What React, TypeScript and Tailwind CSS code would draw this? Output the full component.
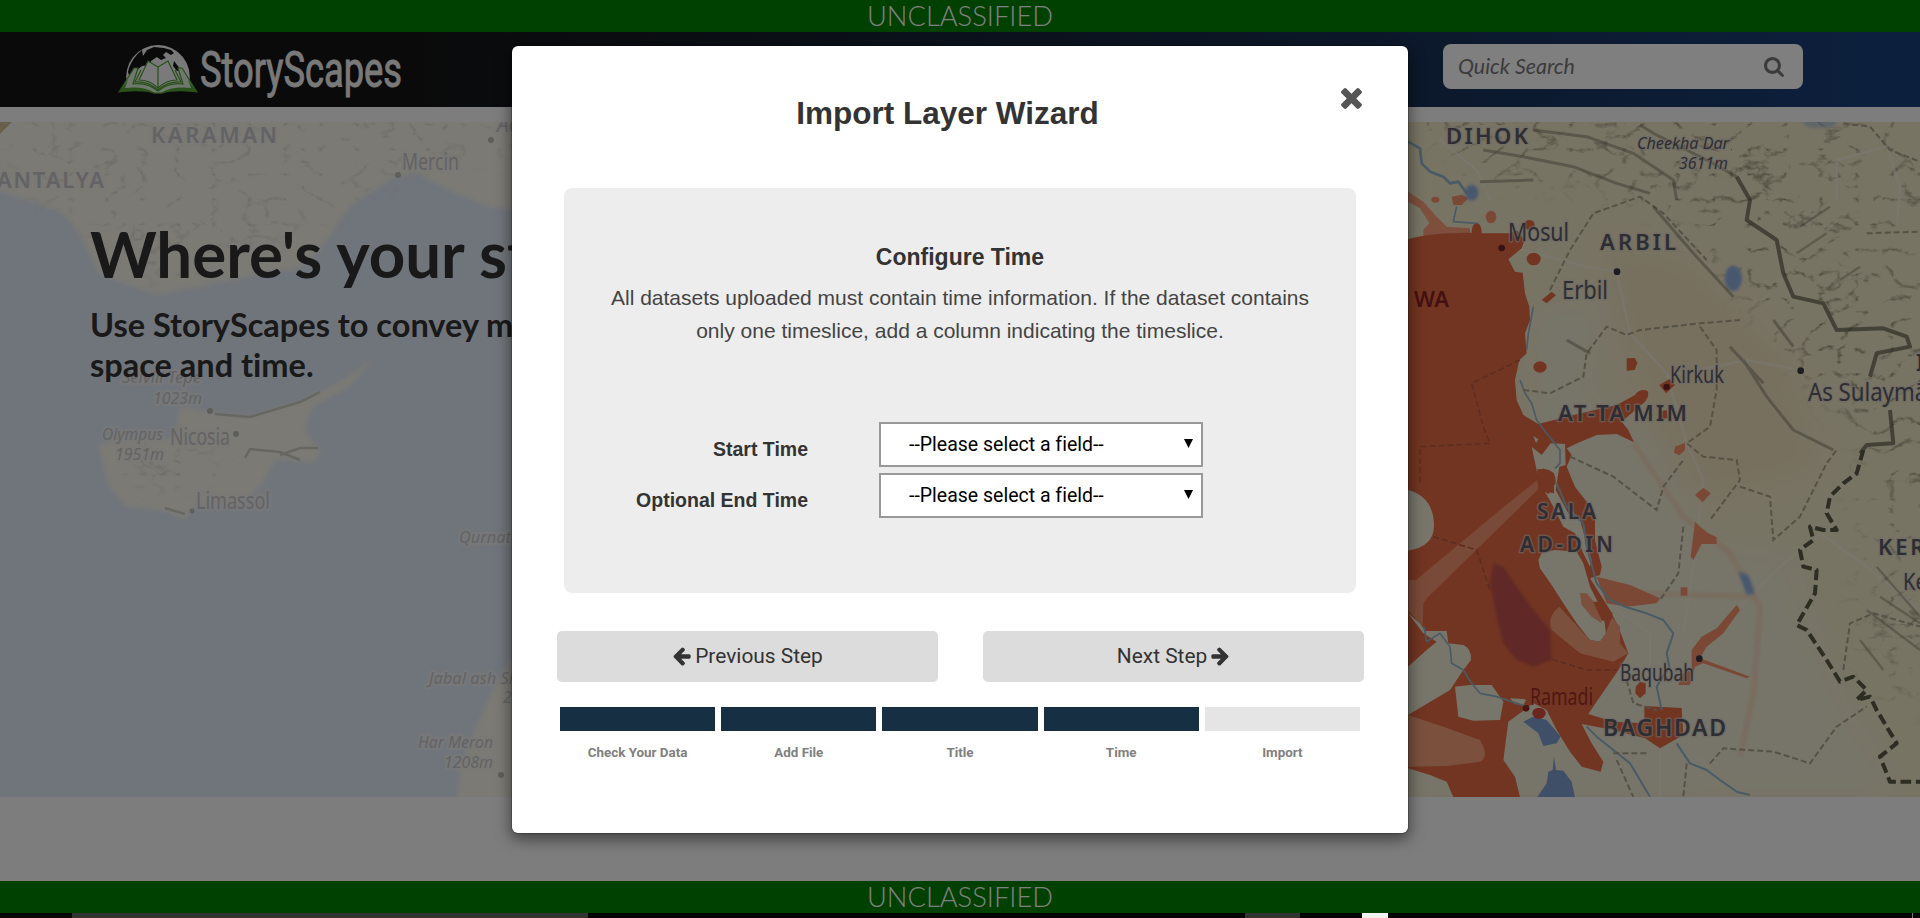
import React from 'react';

const TIMES =
  'M1490 1322q0 40-28 68l-136 136q-28 28-68 28t-68-28l-294-294-294 294q-28 28-68 28t-68-28l-136-136q-28-28-28-68t28-68l294-294-294-294q-28-28-28-68t28-68l136-136q28-28 68-28t68 28l294 294 294-294q28-28 68-28t68 28l136 136q28 28 28 68t-28 68l-294 294 294 294q28 28 28 68z';
const ARROW_LEFT =
  'M1664 896v128q0 53-32.5 90.5t-84.5 37.5h-704l293 294q38 36 38 90t-38 90l-75 76q-37 37-90 37-52 0-91-37l-651-652q-37-37-37-90 0-52 37-91l651-650q38-38 91-38 52 0 90 38l75 74q38 38 38 91t-38 91l-293 293h704q52 0 84.5 37.5t32.5 90.5z';
const SEARCH =
  'M1216 832q0-185-131.5-316.5t-316.5-131.5-316.5 131.5-131.5 316.5 131.5 316.5 316.5 131.5 316.5-131.5 131.5-316.5zm512 832q0 52-38 90t-90 38q-54 0-90-38l-343-342q-179 124-399 124-143 0-273.5-55.5t-225-150-150-225-55.5-273.5 55.5-273.5 150-225 225-150 273.5-55.5 273.5 55.5 225 150 150 225 55.5 273.5q0 220-124 399l343 343q37 37 37 90z';

function Logo() {
  return (
    <svg className="block h-[66px] w-[300px]" viewBox="110 36 300 66">
      <path d="M127 84A31.8 31.8 0 1 1 189 84L158 91Z" fill="#f2f2f2" />
      <path
        d="M129 68Q133 57 142 50L143 56L147 50L154 47L164 48L171 50L174 53L171 55L166 52L163 55L166 58L161 60L157 57L151 61L150 65L142 66L136 71L129 75L128 72Z"
        fill="#141414"
      />
      <path d="M174 61l7 9-4 1-4-5z" fill="#141414" />
      <path
        d="M119 92L134 68L138 68L133 84Q147 82 158 91Q169 82 183 84L178 68L182 68L197 92Q172 88 162 93H154Q144 88 119 92Z"
        fill="#dff0d8"
        stroke="#4e9c30"
        strokeWidth="1.2"
      />
      <path d="M119 92L128 80L125 88Q144 86 155 93H161Q172 86 191 88L188 80L197 92Q172 90 162 93.5H154Q144 90 119 92Z" fill="#52a232" />
      <path
        d="M148 61L158 67V88Q150 80 139 80ZM168 61L158 67V88Q166 80 177 80Z"
        fill="#f5f5f5"
        stroke="#4e9c30"
        strokeWidth="1.2"
      />
      <path d="M141 70L135 82Q148 81 158 90Q168 81 181 82L175 70" fill="none" stroke="#4e9c30" strokeWidth="1.2" />
      <text
        x="200"
        y="87"
        fontFamily="Roboto, sans-serif"
        fontSize="50"
        fill="#f2f2f2"
        stroke="#f2f2f2"
        strokeWidth="0.9"
        textLength="202"
        lengthAdjust="spacingAndGlyphs"
      >
        StoryScapes
      </text>
    </svg>
  );
}

type Label = { t: string; x: number; y: number; w: number; s: number; b?: boolean; i?: boolean; c?: string };

const eastLabels: Label[] = [
  { t: 'DIHOK', x: 1446, y: 144, w: 82, s: 22, b: true },
  { t: 'Cheekha Dar', x: 1637, y: 149, w: 92, s: 17, i: true },
  { t: '3611m', x: 1679, y: 169, w: 49, s: 17, i: true },
  { t: 'Mosul', x: 1508, y: 241, w: 61, s: 26 },
  { t: 'ARBIL', x: 1600, y: 250, w: 76, s: 22, b: true },
  { t: 'Erbil', x: 1562, y: 299, w: 46, s: 26 },
  { t: 'Kirkuk', x: 1670, y: 383, w: 54, s: 23 },
  { t: 'As Sulaymānīyah', x: 1808, y: 401, w: 176, s: 26 },
  { t: "AT-TA'MIM", x: 1558, y: 421, w: 129, s: 22, b: true },
  { t: 'SALA', x: 1537, y: 519, w: 59, s: 21, b: true },
  { t: 'AD-DIN', x: 1520, y: 552, w: 93, s: 21, b: true },
  { t: 'KERMAN', x: 1878, y: 555, w: 108, s: 22, b: true },
  { t: 'Kermanshah', x: 1903, y: 590, w: 120, s: 23 },
  { t: 'IRAN', x: 1916, y: 371, w: 60, s: 23, b: true },
  { t: 'Baqubah', x: 1620, y: 681, w: 74, s: 24 },
  { t: 'BAGHDAD', x: 1603, y: 736, w: 123, s: 23, b: true },
];

const redLabels: Label[] = [
  { t: 'WA', x: 1414, y: 307, w: 35, s: 22, b: true, c: '#8c2020' },
  { t: 'Ramadi', x: 1530, y: 705, w: 63, s: 24, c: '#9c2f28' },
];

const westLabels: Label[] = [
  { t: 'KARAMAN', x: 151, y: 143, w: 126, s: 22, b: true },
  { t: 'ANTALYA', x: -3, y: 188, w: 107, s: 22, b: true },
  { t: 'Mercin', x: 402, y: 170, w: 57, s: 24 },
  { t: 'Adana', x: 497, y: 132, w: 60, s: 22, i: true },
  { t: 'Selvili Tepe', x: 122, y: 383, w: 79, s: 17, i: true },
  { t: '1023m', x: 153, y: 404, w: 49, s: 17, i: true },
  { t: 'Olympus', x: 102, y: 440, w: 61, s: 17, i: true },
  { t: '1951m', x: 115, y: 460, w: 49, s: 17, i: true },
  { t: 'Nicosia', x: 170, y: 445, w: 60, s: 23 },
  { t: 'Limassol', x: 196, y: 509, w: 74, s: 23 },
  { t: 'Qurnat', x: 459, y: 543, w: 52, s: 17, i: true },
  { t: 'Jabal ash Shaykh', x: 429, y: 684, w: 124, s: 17, i: true },
  { t: '2814m', x: 503, y: 703, w: 48, s: 17, i: true },
  { t: 'Har Meron', x: 418, y: 748, w: 75, s: 17, i: true },
  { t: '1208m', x: 444, y: 768, w: 49, s: 17, i: true },
];

function Labels({ items, fill, halo, haloWidth }: { items: Label[]; fill: string; halo: string; haloWidth: number }) {
  return (
    <g
      fontFamily="'Noto Sans', 'Open Sans', sans-serif"
      paintOrder="stroke"
      strokeWidth={haloWidth}
      strokeLinejoin="round"
      strokeOpacity="0.6"
    >
      {items.map((l) => (
        <text
          key={l.t}
          x={l.x}
          y={l.y}
          fontSize={l.s}
          fontWeight={l.b ? 600 : 400}
          fontStyle={l.i ? 'italic' : 'normal'}
          fill={l.c ?? fill}
          stroke={l.c ? 'none' : halo}
          textLength={l.w}
          lengthAdjust={l.b ? 'spacing' : 'spacingAndGlyphs'}
        >
          {l.t}
        </text>
      ))}
    </g>
  );
}

function MapBackdrop() {
  return (
    <svg className="absolute inset-0 h-full w-full" viewBox="0 122 1920 675" preserveAspectRatio="none">
      <defs>
        <filter id="relief" x="0" y="0" width="100%" height="100%" colorInterpolationFilters="sRGB">
          <feTurbulence type="turbulence" baseFrequency="0.028 0.04" numOctaves="4" seed="8" result="n" />
          <feColorMatrix in="n" type="matrix" values="0 0 0 0 0.33  0 0 0 0 0.31  0 0 0 0 0.22  -5 0 0 0 0.95" />
        </filter>
        <filter id="soft" x="-20%" y="-20%" width="140%" height="140%">
          <feGaussianBlur stdDeviation="14" />
        </filter>
        <filter id="soft2" x="-40%" y="-40%" width="180%" height="180%">
          <feGaussianBlur stdDeviation="4" />
        </filter>
        <filter id="soft3" x="-20%" y="-20%" width="140%" height="140%">
          <feGaussianBlur stdDeviation="2" />
        </filter>
        <mask id="ranges" maskUnits="userSpaceOnUse" x="1400" y="122" width="520" height="675">
          <g filter="url(#soft)" fill="#fff">
            <path d="M1400 100H1960V480L1890 470L1850 430L1800 370L1745 300L1680 225L1590 185L1480 180Z" fillOpacity="0.6" />
            <path d="M1650 120H1760L1790 220L1840 300L1880 400L1830 370L1745 270L1690 190Z" fillOpacity="0.5" />
            <path d="M1780 340L1960 300V700L1880 600L1850 480L1900 440Z" fillOpacity="0.5" />
            <path d="M1850 580L1960 600V730L1870 690Z" fillOpacity="0.4" />
          </g>
        </mask>
        <mask id="taurus" maskUnits="userSpaceOnUse" x="0" y="122" width="520" height="675">
          <g filter="url(#soft)" fill="#fff">
            <path d="M0 100H520V150L400 170L300 230L160 290L90 230L20 180Z" fillOpacity="0.5" />
            <path d="M120 455H230L200 480H130Z" fillOpacity="0.9" />
          </g>
        </mask>
      </defs>

      <rect x="0" y="122" width="960" height="675" fill="#e1eaf6" />
      <g fill="#f6f4e9" filter="url(#soft3)">
        <path d="M-20 100H540V212L490 207L455 193L415 173L392 178L350 206L320 250L300 268L240 278L157 295L100 275L80 235L65 215L35 202L-20 186Z" />
        <path d="M180 406L215 413L250 416L300 402L340 382L372 360L350 386L312 407L305 428L312 442L320 450L316 462L275 460L262 484L245 500L195 505L185 520L165 511L125 506L108 485L98 445L120 440L175 438Z" />
        <path d="M540 660H510L490 695L475 730L460 770L455 820H540Z" />
      </g>
      <path d="M0 122H12L0 134Z" fill="#d0c096" />
      <rect x="0" y="122" width="520" height="675" filter="url(#relief)" mask="url(#taurus)" opacity="0.35" />
      <path
        d="M215 414L250 417L300 402L320 392M245 458L250 449L280 452L300 460M280 455L300 448H318M165 508L185 514"
        fill="none"
        stroke="#cfcec2"
        strokeWidth="2.5"
      />
      <g fill="#bcbdb5">
        <circle cx="491" cy="140" r="3" />
        <circle cx="398" cy="175" r="3" />
        <circle cx="236" cy="434" r="3" />
        <circle cx="210" cy="411" r="3" />
        <circle cx="192" cy="511" r="2.5" />
        <circle cx="501" cy="775" r="3" />
      </g>
      <Labels items={westLabels} fill="#c6c6ca" halo="#f4f2ee" haloWidth={5} />

      <rect x="1400" y="122" width="520" height="675" fill="#f1e8c8" />
      <g filter="url(#soft)" fill="#eeead4">
        <path d="M1530 320L1600 300L1580 400L1640 420L1690 520L1700 797H1400V640L1560 600Z" />
        <path d="M1690 540L1790 560L1840 700L1900 797H1700Z" fillOpacity="0.8" />
      </g>
      <g filter="url(#soft)" fill="#ecdcb8" fillOpacity="0.6">
        <path d="M1600 240L1690 260L1790 360L1820 470L1700 500L1640 400Z" />
      </g>
      <rect x="1400" y="122" width="520" height="675" filter="url(#relief)" mask="url(#ranges)" opacity="0.8" />

      {/* Coordinates below are in thirds of a pixel, measured from the east sheet's corner. */}
      <g transform="translate(1400 0) scale(0.33333)">
        <g fill="none" stroke="#f5eee0" strokeWidth="7" strokeOpacity="0.6">
          <path d="M120 420L230 510L270 600M330 740L560 800L650 815L690 1000L800 1120L860 1330L910 1440L880 1700L850 1900M800 1130L1040 1080L1200 1110M1260 1600L1130 1710L1040 1800L900 1960M1260 1600L1400 1700L1560 1830M1310 600V480L1460 440L1500 560L1490 680" />
          <path d="M640 1820L750 1900V2060M780 2250V2390M900 2270L960 2350" />
        </g>
        <g stroke="#f6ba94" strokeWidth="16" fill="none" strokeOpacity="0.35" filter="url(#soft2)">
          <path d="M700 1330L850 1550L990 1660L1080 1820L1060 2080L1020 2270M720 1780L1070 1790" />
        </g>

        <path d="M24 575L70 605L110 650L140 680L210 685V710H70V690L88 670L60 625L24 605Z" fill="#fb9e78" />
        <path
          d="M24 718Q90 697 215 698Q215 670 232 668Q246 675 245 700L330 700L352 692L374 720L365 745L325 778L345 815L368 818L375 880L388 920L390 960L375 1000L380 1060L358 1080L345 1140L350 1200L370 1245L415 1272L520 1245L650 1215L705 1185Q718 1165 742 1172Q750 1185 735 1205L665 1265L685 1290L702 1327L650 1302L590 1305L535 1328L500 1345L515 1365L500 1400L525 1460L560 1505L585 1560V1620L605 1700L600 1725L570 1735L630 1830L655 1880L685 1960L655 2010L565 2142L640 2165L733 2170V2118L845 2124L850 2205L780 2245L735 2215L640 2190L545 2172L575 2230L610 2285L602 2315L545 2300L510 2255L470 2190L440 2130L400 2110L325 2165L310 2280L345 2330L360 2391H160L140 2345L90 2325L24 2305Z"
          fill="#e56b45"
        />
        <g fill="#e56b45">
          <ellipse cx="420" cy="1101" rx="20" ry="17" />
          <path d="M680 1075L705 1074L712 1090L704 1110L680 1112Z" />
          <path d="M778 1155L808 1137L825 1155L798 1180Z" />
          <path d="M778 1235L800 1230L804 1255L780 1256Z" />
          <path d="M425 900L455 875L468 886L440 910Z" />
          <ellipse cx="401" cy="777" rx="21" ry="19" />
          <ellipse cx="388" cy="675" rx="16" ry="15" />
        </g>
        <g fill="#f5906b">
          <path d="M155 590L185 584L205 595L185 615H160Z" />
          <ellipse cx="106" cy="599" rx="12" ry="9" />
          <ellipse cx="273" cy="651" rx="16" ry="19" />
          <path d="M825 1340L855 1328V1350L838 1366L822 1358Z" />
          <path d="M885 1485L910 1463L932 1480L908 1507Z" />
          <path d="M872 1670L885 1565L900 1580L925 1600L950 1612V1632H905L880 1680Z" />
          <rect x="842" y="1762" width="20" height="25" />
          <path d="M1010 1815L1020 1830L970 1900L920 1940L900 1975L1050 2030L1040 2035L910 1990L885 2000L870 2055H835L850 2020L875 2010V1950L905 1910L950 1885Z" />
          <path d="M590 1730L690 1755L780 1795L770 1810L680 1820L620 1810Z" />
        </g>
        <path d="M707 2060L720 2045L737 2050V2080L720 2095L706 2080Z" fill="#e56b45" />

        <g fill="#f1ecd6">
          <path d="M395 1340L425 1365L452 1330L495 1332L497 1395L478 1400L467 1470L505 1540L540 1560L560 1630L575 1680L570 1700L550 1660L525 1600L490 1580L460 1520L435 1475L462 1480V1420L430 1405L412 1420Z" />
          <path d="M415 1680L425 1660L465 1650L530 1655L550 1690L570 1760L610 1840L618 1900L600 1925L570 1920L530 1870L490 1810L455 1755L420 1705Z" />
          <path d="M24 1470Q100 1490 102 1575Q103 1640 24 1652Z" />
          <path d="M24 1840L60 1870L75 1893H140L145 1930L190 1935Q215 1945 213 1980L190 2010L150 2070L24 2145V2000L80 1950L110 1925L70 1900Z" />
          <path d="M165 2060L210 2055L275 2055L310 2105L300 2160L220 2162L175 2150Z" />
          <path d="M330 2095L380 2098L370 2115L345 2112Z" />
          <path d="M400 1308L415 1318L408 1330Z" />
        </g>
        <path d="M412 1408Q470 1400 467 1450L445 1482L412 1460Z" fill="#e56b45" />

        <path d="M412 1440L300 1530L24 1760V1800H75L415 1468Z" fill="#f7a27c" fillOpacity="0.75" />
        <path d="M24 1740H120L70 1810L68 1880L24 1830Z" fill="#f29570" />
        <path d="M24 2145L130 2180L240 2220Q270 2270 240 2285L140 2298L24 2300Z" fill="#f6a07b" />
        <path d="M478 1820Q440 1850 455 1890L540 1960L640 1985L685 1960L660 1930V1880L635 1850L618 1900L600 1925L570 1920Z" fill="#f6a07b" />
        <path d="M540 1780H560L590 1815L605 1870L575 1850L545 1815Z" fill="#f6a07b" />
        <path d="M580 1805L610 1805L637 1840L635 1860L605 1862Z" fill="#e56b45" />
        <path d="M280 1690L310 1700L350 1760L400 1830L450 1890L455 1980L400 2000L350 1980L310 1930L290 1850L270 1750Z" fill="#9c3a52" fillOpacity="0.5" filter="url(#soft2)" />

        <g fill="#7f9fd0">
          <path d="M370 2165L400 2150L440 2160L482 2210L470 2230L430 2238L415 2200Z" />
          <path d="M412 2391L440 2350L445 2315L458 2310L462 2270L468 2310L490 2312L515 2345L525 2391Z" />
        </g>
        <ellipse cx="417" cy="2140" rx="20" ry="17" fill="#d84c3e" />
        <g fill="#8fb0dc" filter="url(#soft2)">
          <ellipse cx="1000" cy="835" rx="26" ry="38" />
          <path d="M1015 1715L1045 1725L1065 1780L1040 1785Z" />
          <ellipse cx="215" cy="578" rx="20" ry="24" />
          <ellipse cx="1260" cy="370" rx="50" ry="14" fillOpacity="0.5" />
        </g>
        <g fill="none" stroke="#94b5c8" strokeWidth="8" strokeLinejoin="round">
          <path d="M24 425L60 445L65 490L90 515L130 530L150 550L175 545L200 580" />
          <path d="M170 620L160 665L230 670M400 920L385 1000L380 1050M360 1140L375 1180L395 1210L410 1260L440 1300L480 1350V1390L465 1405" strokeWidth="5" />
          <path d="M470 1450L500 1520L550 1570L560 1640L590 1750L630 1800L680 1822L740 1840L790 1860L820 1900L800 1960L808 2000L770 2060L785 2130" strokeWidth="6" />
          <path d="M72 1880L80 1925L120 1900L150 1940L155 1990L190 2010L215 2050L240 2080L290 2090L380 2120" strokeWidth="5" />
          <path d="M560 2180L590 2210L640 2250L690 2290L720 2340L750 2391M830 2230L870 2290L920 2310L960 2340L1010 2375L1050 2385" strokeWidth="6" />
        </g>
        <g fill="none" stroke="#aba389" strokeWidth="6" strokeDasharray="18 9">
          <path d="M450 870L510 750L580 640L720 590L790 640L920 780" />
          <path d="M370 1170L450 1180L550 1130L560 1060L620 980L680 1005L720 990L900 970L1020 960M900 980L950 1050L950 1170L930 1280L860 1330L910 1370L1010 1380L1020 1440L930 1560M1020 1460L1110 1490L1120 1620L1200 1550L1280 1390L1310 1350" />
          <path d="M510 1370L640 1430L770 1530L790 1460L850 1380M850 1580L835 1720L780 1800M680 2040L700 2110L770 2130M860 2290L850 2391M640 2260L740 2260M650 2280L700 2391M930 2290L970 2245L1120 2255L1230 2290L1310 2180L1400 2120" />
          <path d="M360 1080L215 1150L250 1280L270 1330L60 1340V1450M100 1610L230 1650L270 1770M430 1970L560 2010L650 2010" stroke="#bb5a3f" strokeWidth="5" />
          <path d="M1330 2010L1350 1870L1420 1840L1560 1880M1330 370L1410 380L1470 450L1560 485M1400 700L1560 695" />
        </g>
        <g fill="none" stroke="#5b5a48" strokeLinejoin="round">
          <path
            d="M1390 1350L1370 1420L1330 1450L1290 1490L1280 1540L1310 1590H1270L1230 1580L1240 1620L1200 1650L1210 1700L1250 1710L1245 1780L1190 1875L1220 1890L1280 1980L1320 2045L1360 2030L1400 2070L1370 2100L1410 2090L1430 2130L1490 2230L1440 2270L1470 2345H1560"
            strokeWidth="12"
            strokeDasharray="32 14"
          />
          <path
            d="M1010 530L1050 600L1040 660L1130 720L1150 820L1180 890L1270 910L1310 990L1450 985L1520 1010L1530 1040L1430 1060L1410 1130M1380 1360L1400 1335L1480 1330L1470 1230"
            strokeWidth="12"
            strokeOpacity="0.7"
            filter="url(#soft3)"
          />
          <path
            d="M720 375L760 400L920 480L1010 530M250 450L370 470L520 500L650 550L750 580M240 545L400 540M400 390L560 410L700 460L820 540L830 600M760 620L880 760L1000 890M1030 1080L1100 1190L1180 1290L1300 1350M990 1040L1090 1150M500 1020L570 1060M1120 960L1180 1040"
            strokeWidth="9"
            strokeOpacity="0.4"
            filter="url(#soft3)"
          />
          <path d="M1400 1830L1560 1950M1440 1790L1560 1870M1430 1700L1560 1850M1380 1920L1450 2010M1200 680L1290 620M1190 760L1280 700M1320 840L1380 800" strokeWidth="7" strokeOpacity="0.35" filter="url(#soft3)" />
        </g>
        <g fill="#3b3a42">
          <circle cx="651" cy="815" r="10" />
          <circle cx="1202" cy="1112" r="10" />
          <circle cx="898" cy="1976" r="10" />
          <circle cx="305" cy="744" r="10" fill="#7a2222" />
          <circle cx="800" cy="1161" r="10" fill="#7a2222" />
          <circle cx="378" cy="2125" r="10" fill="#8a2c26" />
        </g>
      </g>
      <Labels items={eastLabels} fill="#5c5a66" halo="#dcd4cc" haloWidth={3} />
      <Labels items={redLabels} fill="#8c2020" halo="none" haloWidth={0} />
    </svg>
  );
}

function ClassificationBar() {
  return (
    <div className="flex h-8 shrink-0 items-center justify-center bg-[#008000]">
      <span className="font-['Lato',sans-serif] text-[27.3px] leading-8 font-light text-white">UNCLASSIFIED</span>
    </div>
  );
}

function Arrow({ flip }: { flip?: boolean }) {
  return (
    <svg className={flip ? 'h-[21px] w-[20px] -scale-x-100' : 'h-[21px] w-[20px]'} viewBox="60 64 1720 1792" fill="#333">
      <path d={ARROW_LEFT} />
    </svg>
  );
}

function FieldRow({ label }: { label: string }) {
  return (
    <div className="flex h-[45px]">
      <div className="w-[244px] pt-[15px] text-right text-[19.5px] leading-6 font-bold text-[#333]">{label}</div>
      <div className="ml-[71px] flex w-[324px] items-center justify-between border-2 border-[#999] bg-white pr-[8px] pl-[28px] font-['Roboto',sans-serif] text-[19.5px] text-black">
        <span className="pt-px whitespace-nowrap">--Please select a field--</span>
        <svg className="mb-[2px] h-[9px] w-[9px]" viewBox="0 0 9 9">
          <path d="M0 0H9L4.5 9Z" />
        </svg>
      </div>
    </div>
  );
}

const steps = [
  { name: 'Check Your Data', done: true },
  { name: 'Add File', done: true },
  { name: 'Title', done: true },
  { name: 'Time', done: true },
  { name: 'Import', done: false },
];

function Wizard() {
  return (
    <div className="relative h-[789px] w-[898px] rounded-[7px] border border-black/20 bg-white bg-clip-padding font-['Liberation_Sans',sans-serif] shadow-[0_5px_15px_rgba(0,0,0,0.5)]">
      <button className="absolute top-[40px] right-[44px]">
        <svg className="h-[25px] w-[25px]" viewBox="186 250 1420 1420" fill="#555">
          <path d={TIMES} />
        </svg>
      </button>
      <h1 className="mr-[25px] pt-[47px] text-center text-[31.5px] leading-[40px] font-bold text-[#333]">Import Layer Wizard</h1>
      <section className="mx-[52px] mt-[55px] h-[405px] rounded-[8px] bg-[#ededed]">
        <h2 className="pt-[54px] text-center text-[23px] leading-[30px] font-bold text-[#333]">Configure Time</h2>
        <p className="mx-auto mt-[9px] w-[760px] text-center text-[21px] leading-[33px] text-[#444]">
          All datasets uploaded must contain time information. If the dataset contains
          <br />
          only one timeslice, add a column indicating the timeslice.
        </p>
        <div className="mt-[75px] flex flex-col gap-[6px]">
          <FieldRow label="Start Time" />
          <FieldRow label="Optional End Time" />
        </div>
      </section>
      <div className="mr-[44px] ml-[45px] mt-[38px] flex justify-between font-['Roboto',sans-serif] text-[20.9px] text-[#333]">
        <button className="flex h-[51px] w-[381px] items-center justify-center gap-[3px] rounded-[5px] bg-[#dcdcdc]">
          <Arrow />
          Previous Step
        </button>
        <button className="flex h-[51px] w-[381px] items-center justify-center gap-[3px] rounded-[5px] bg-[#dcdcdc]">
          Next Step
          <Arrow flip />
        </button>
      </div>
      <div className="mx-[48px] mt-[25px] grid grid-cols-5 gap-[6px]">
        {steps.map((s) => (
          <div key={s.name} className="text-center">
            <div className={s.done ? 'h-6 bg-[#172f43]' : 'h-6 bg-[#e5e5e5]'} />
            <div className="mt-[12px] font-['Roboto',sans-serif] text-[13.4px] leading-5 font-bold text-[#808080]">{s.name}</div>
          </div>
        ))}
      </div>
    </div>
  );
}

export default function App() {
  return (
    <div className="relative flex h-[918px] w-[1920px] flex-col overflow-hidden bg-[#fafafa] font-['Lato',sans-serif] [font-variant-ligatures:none]">
      <ClassificationBar />
      <header className="flex h-[75px] shrink-0 items-start justify-between bg-linear-to-r from-[#141414] from-20% to-[#18407c] pr-[117px] pl-[110px]">
        <div className="pt-[4px]">
          <Logo />
        </div>
        <div className="mt-[12px] flex h-[45px] w-[360px] items-center justify-between rounded-[8px] bg-white pr-[19px] pl-[15px]">
          <span className="pb-px text-[21.4px] text-[#777] italic">Quick Search</span>
          <svg className="h-[20px] w-[20px]" viewBox="64 128 1664 1664" fill="#777">
            <path d={SEARCH} />
          </svg>
        </div>
      </header>
      <main className="relative mt-[15px] h-[675px] shrink-0 overflow-hidden">
        <MapBackdrop />
        <div className="relative w-[760px] pt-[90px] pl-[90px] font-bold text-[#333]">
          <h1 className="text-[63.6px] leading-[84px] whitespace-nowrap">Where's your story?</h1>
          <p className="mt-[9px] text-[32.5px] leading-[40px] whitespace-nowrap">
            Use StoryScapes to convey meaning across
            <br />
            space and time.
          </p>
        </div>
      </main>
      <div className="h-[84px] shrink-0" />
      <ClassificationBar />
      <div className="absolute inset-0 flex items-start justify-center bg-black/50 pt-[45px]">
        <Wizard />
      </div>
      <div className="relative flex h-[5px] shrink-0 bg-black">
        <div className="w-[72px] bg-[#050505]" />
        <div className="w-[516px] bg-[#333]" />
        <div className="w-[657px]" />
        <div className="w-[55px] bg-[#333]" />
        <div className="w-[62px]" />
        <div className="w-[26px] bg-[#f2f2f2]" />
        <div className="ml-[524px] w-px bg-[#777]" />
      </div>
    </div>
  );
}
